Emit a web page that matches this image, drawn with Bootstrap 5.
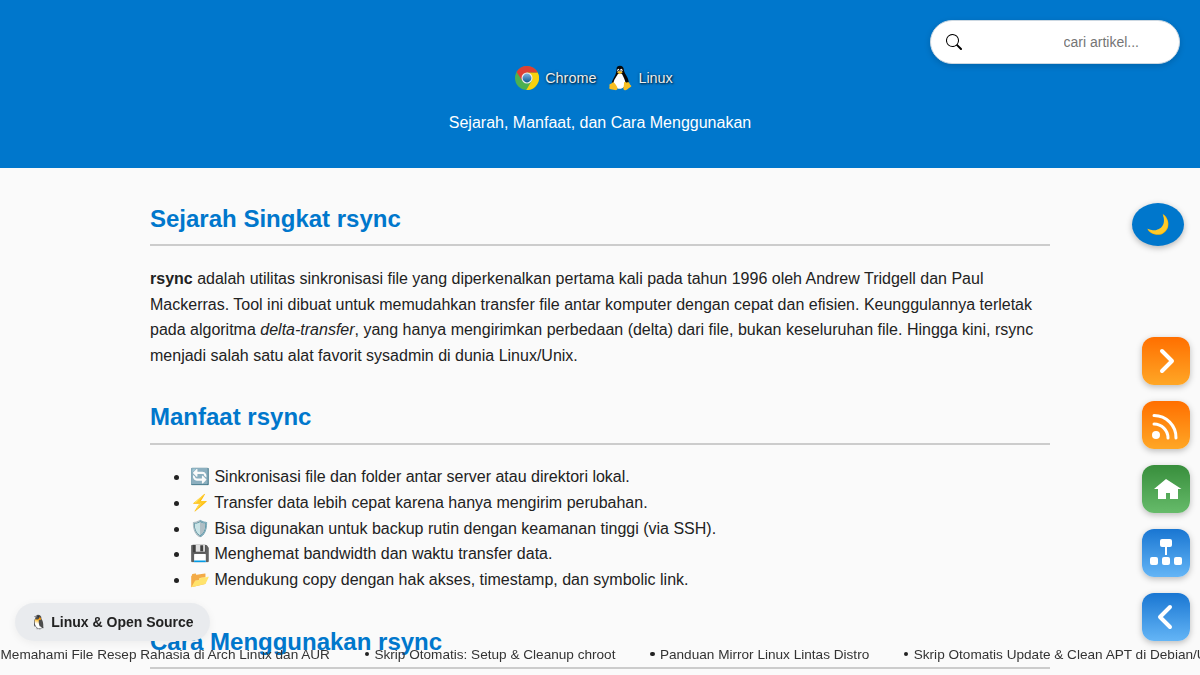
<!DOCTYPE html>
<html lang="id">
<head>
<meta charset="utf-8">
<meta name="viewport" content="width=device-width, initial-scale=1">
<title>rsync</title>
<link href="https://cdn.jsdelivr.net/npm/bootstrap@5.3.0/dist/css/bootstrap.min.css" rel="stylesheet">
<style>
html{overflow:hidden}
body{font-family:"Liberation Sans",Arial,sans-serif;font-size:16px;line-height:1.6;background:#fafafa;color:#222;height:675px;overflow:hidden}
.site-header{height:168px;background:#0077cc;padding-top:62px}
.tags{height:32px;font-size:14.4px;color:#eee;margin-left:-12px;text-shadow:1px 1px 2px rgba(0,0,0,.7),0 0 3px rgba(0,0,0,.45)}
.tags span{padding-top:2px}
.tagline{margin-top:15.5px;color:#fff}
.searchbox{top:20px;right:20px;width:250px;height:44px;background:#fff;border:1px solid #ccd8e2;box-shadow:0 2px 6px rgba(0,0,0,.16);padding:0 39.5px 0 15px}
.searchbox input{font-size:14px;width:76px;border:0;outline:0;background:none;padding:0}
.searchbox input::placeholder{color:#757575;opacity:1}
.article{width:900px;padding-top:32px}
.article h2{font-size:24px;font-weight:700;line-height:38.4px;color:#0077cc;border-bottom:2px solid #ccc;padding-bottom:6px;margin:0 0 19.6px}
.article ul{padding-left:40px;padding-top:.3px;margin-bottom:30.2px}
.article p{margin:0 0 29.8px}
.theme-btn{left:1132px;top:203px;width:52px;height:43px;border-radius:50%;background:#0077cc;box-shadow:0 2px 6px rgba(0,0,0,.28);font-size:19.2px}
.theme-btn span{padding-top:2px}
.side{left:1142px;top:337px;gap:16px}
.side a{width:48px;height:48px;border-radius:12px;box-shadow:0 2px 6px rgba(0,0,0,.25);display:block}
.orange{background:linear-gradient(#ff6f00,#ffa726)}
.green{background:linear-gradient(#388e3c,#66bb6a)}
.blue{background:linear-gradient(#1976d2,#64b5f6)}
.chip{left:15px;top:603px;width:195px;height:38px;background:#e9ebee;font-size:14px;font-weight:700;box-shadow:0 2px 8px rgba(0,0,0,.06);padding-left:15.4px;line-height:38px}
.ticker{left:.5px;top:644px;font-size:13.6px;line-height:21px;color:#333;white-space:nowrap}
.ticker .dot{width:4.4px;height:4.4px;border-radius:50%;background:#222;flex:none;margin:0 5.3px 1px 34.8px}
</style>
</head>
<body>
<header class="site-header position-relative text-center">
  <div class="tags d-flex justify-content-center align-items-center">
    <svg width="24" height="24" viewBox="0 0 48 48"><defs><linearGradient id="cb" x2="0" y2="1"><stop stop-color="#81b4e0"/><stop offset="1" stop-color="#0c5a94"/></linearGradient></defs>
      <circle cx="24" cy="24" r="24" fill="#4cb050"/>
      <path d="M24 13H45.3A24 24 0 0 1 22.5 48L33.5 29.5z" fill="#f9d10e"/>
      <path d="M3.2 12 14.5 29.5 24 13H45.3A24 24 0 0 0 3.2 12z" fill="#dd3f35"/>
      <circle cx="24" cy="24" r="11" fill="#eee"/><circle cx="24" cy="24" r="8.8" fill="url(#cb)"/></svg>
    <span style="margin-left:6px">Chrome</span>
    <svg width="24" height="26" viewBox="0 0 24 26" style="margin-left:12px"><path d="M8.500 4C8.500 1.500 10 .8 12 .8s3.700 1.200 3.900 4.200c.2 3.500 4.300 6.500 4.800 12 .2 3-2 6-4 6H8c-2 0-4.500-3-4.200-5C4.500 13.500 8.800 10 8.500 4z" fill="#080808"/><path d="M10 8.700c-1.500 3-4.500 6-4.500 10 0 2.500 2.700 5 6.200 5s5.800-2.500 5.800-5.300c0-3.500-2.300-6.500-3.600-9.700z" fill="#fff"/><ellipse cx="10.300" cy="5.200" rx="1" ry="1.500" fill="#fff"/><ellipse cx="13.300" cy="5.200" rx="1.200" ry="1.500" fill="#fff"/><circle cx="10.600" cy="5.500" r=".5"/><circle cx="13" cy="5.500" r=".5"/><path d="m8.900 7.200 2.800-1.100 3.100 1.200-3 2z" fill="#f8bf22"/><path d="M2.300 19c1.300 0 2.300-2.200 3.500-1.500 1.400 1 3.200 4 3.600 5.300.5 2-1 2.700-2.500 2.300-1.700-.7-3.800-.6-5-1.200-1.300-.7-.2-1.700-.4-2.700-.1-1-.2-2.200.8-2.200zM16 18c0-1.400 1-1.300 1.800-.7 1 .8 2.400-.3 3.200.2.800.8.400 1.900 1.700 2.700 1.700 1.200-.2 1.900-1.700 2.800-1.300.8-2.500 2.300-4 2.200-2-.2-1.800-2.200-1.400-3.500.3-1.200.4-2.400.4-3.700z" fill="#f8bf22"/></svg>
    <span style="margin-left:6px">Linux</span>
  </div>
  <div class="tagline">Sejarah, Manfaat, dan Cara Menggunakan</div>
  <div class="searchbox position-absolute rounded-pill d-flex align-items-center justify-content-between">
    <svg width="16" height="16" viewBox="0 0 16 16"><path d="M11.742 10.344a6.500 6.500 0 1 0-1.397 1.398h-.001q.044.060.098.115l3.850 3.850a1 1 0 0 0 1.415-1.414l-3.850-3.850a1 1 0 0 0-.115-.1zM12 6.500a5.500 5.500 0 1 1-11 0 5.500 5.500 0 0 1 11 0"/></svg>
    <input type="text" placeholder="cari artikel..." aria-label="cari artikel">
  </div>
</header>
<main class="article mx-auto">
  <h2>Sejarah Singkat rsync</h2>
  <p><b>rsync</b> adalah utilitas sinkronisasi file yang diperkenalkan pertama kali pada tahun 1996 oleh Andrew Tridgell dan Paul Mackerras. Tool ini dibuat untuk memudahkan transfer file antar komputer dengan cepat dan efisien. Keunggulannya terletak pada algoritma <i>delta-transfer</i>, yang hanya mengirimkan perbedaan (delta) dari file, bukan keseluruhan file. Hingga kini, rsync menjadi salah satu alat favorit sysadmin di dunia Linux/Unix.</p>
  <h2>Manfaat rsync</h2>
  <ul>
    <li>🔄 Sinkronisasi file dan folder antar server atau direktori lokal.</li>
    <li>⚡ Transfer data lebih cepat karena hanya mengirim perubahan.</li>
    <li>🛡️ Bisa digunakan untuk backup rutin dengan keamanan tinggi (via SSH).</li>
    <li>💾 Menghemat bandwidth dan waktu transfer data.</li>
    <li>📂 Mendukung copy dengan hak akses, timestamp, dan symbolic link.</li>
  </ul>
  <h2>Cara Menggunakan rsync</h2>
</main>
<button class="theme-btn position-fixed border-0 p-0 d-flex align-items-center justify-content-center" aria-label="Tema"><span>🌙</span></button>
<nav class="side position-fixed d-flex flex-column">
  <a class="orange" href="#"><svg width="48" height="48" fill="none" stroke="#fff" stroke-width="4" stroke-linecap="round" stroke-linejoin="round"><path d="m20 14 10 10-10 10"/></svg></a>
  <a class="orange" href="#"><svg width="48" height="48" fill="none" stroke="#fff" stroke-width="3" stroke-linecap="round"><circle cx="14" cy="34" r="4" fill="#fff" stroke="none"/><path d="M12 23A14 14 0 0 1 26 37M12 14.500A22 22 0 0 1 34 37"/></svg></a>
  <a class="green" href="#"><svg width="48" height="48" fill="#fff"><path d="M24 14 39.500 24H36V34H28V28H24V34H16V24H12z"/></svg></a>
  <a class="blue" href="#"><svg width="48" height="48" fill="#fff"><rect x="18" y="10" width="12" height="8" rx="2"/><path d="M23 18h2v8h-2z"/><rect x="8" y="28" width="8" height="8" rx="2"/><rect x="20" y="28" width="8" height="8" rx="2"/><rect x="32" y="28" width="8" height="8" rx="2"/></svg></a>
  <a class="blue" href="#"><svg width="48" height="48" fill="none" stroke="#fff" stroke-width="4" stroke-linecap="round" stroke-linejoin="round"><path d="M28 14 18 24l10 10"/></svg></a>
</nav>
<div class="chip position-fixed rounded-pill text-nowrap">🐧 Linux &amp; Open Source</div>
<div class="ticker position-fixed d-flex align-items-center">
  <span>Memahami File Resep Rahasia di Arch Linux dan AUR</span>
  <i class="dot"></i><span>Skrip Otomatis: Setup &amp; Cleanup chroot</span>
  <i class="dot"></i><span>Panduan Mirror Linux Lintas Distro</span>
  <i class="dot"></i><span>Skrip Otomatis Update &amp; Clean APT di Debian/Ubuntu</span>
</div>
<script src="https://cdn.jsdelivr.net/npm/bootstrap@5.3.0/dist/js/bootstrap.bundle.min.js"></script>
</body>
</html>
